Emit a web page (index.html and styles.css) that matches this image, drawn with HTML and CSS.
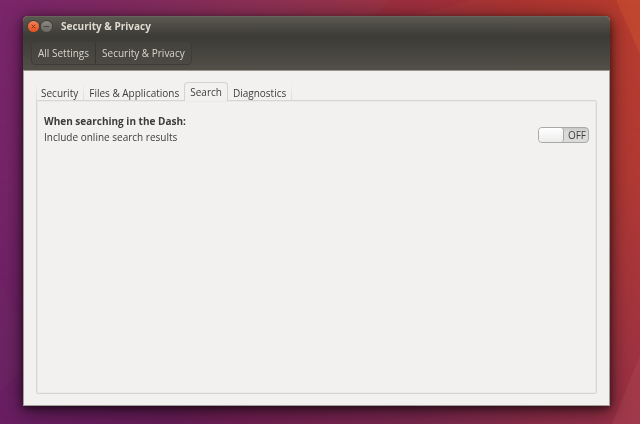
FILE: index.html
```html
<!DOCTYPE html>
<html lang="en">
<head>
<meta charset="utf-8">
<meta name="viewport" content="width=device-width, initial-scale=1">
<title>Security &amp; Privacy</title>
<link rel="stylesheet" href="styles.css">
</head>
<body>
<svg class="wallpaper" viewBox="0 0 640 424" preserveAspectRatio="none" aria-hidden="true">
  <defs>
    <linearGradient id="top" x1="0" y1="0" x2="1" y2="0">
      <stop offset="0" stop-color="#7a266b"/>
      <stop offset=".2" stop-color="#7f2a5f"/>
      <stop offset=".45" stop-color="#8e3151"/>
      <stop offset=".6" stop-color="#993343"/>
      <stop offset=".8" stop-color="#a93431"/>
      <stop offset="1" stop-color="#b83c2e"/>
    </linearGradient>
    <linearGradient id="bottom" x1="0" y1="0" x2="1" y2="0">
      <stop offset="0" stop-color="#681e62"/>
      <stop offset=".25" stop-color="#641c56"/>
      <stop offset=".4" stop-color="#701f50"/>
      <stop offset=".65" stop-color="#78274e"/>
      <stop offset="1" stop-color="#983045"/>
    </linearGradient>
    <linearGradient id="fade" x1="0" y1="0" x2="0" y2="1">
      <stop offset="0" stop-color="#fff" stop-opacity="0"/>
      <stop offset=".4" stop-color="#fff" stop-opacity=".2"/>
      <stop offset="1" stop-color="#fff"/>
    </linearGradient>
    <mask id="lower"><rect width="640" height="424" fill="url(#fade)"/></mask>
  </defs>
  <rect width="640" height="424" fill="url(#top)"/>
  <rect width="640" height="424" fill="url(#bottom)" mask="url(#lower)"/>
  <path d="M389 0H470L400 20H372Z" fill="#9b2438" fill-opacity=".3"/>
  <path d="M616 0H640V54Z" fill="#cf5733" fill-opacity=".4"/>
  <path d="M0 280L24 330V368L0 391Z" fill="#6f3064" fill-opacity=".25"/>
  <path d="M640 356V424H612Z" fill="#b04b57" fill-opacity=".35"/>
</svg>

<main class="window">
  <header class="chrome">
    <div class="titlebar">
      <button class="control close" type="button" aria-label="Close">
        <svg viewBox="0 0 12 12" aria-hidden="true"><path d="M4 4L8 8M8 4L4 8"/></svg>
      </button>
      <button class="control minimize" type="button" aria-label="Minimize">
        <svg viewBox="0 0 12 12" aria-hidden="true"><path d="M3 6H9"/></svg>
      </button>
      <h1 class="title">Security &amp; Privacy</h1>
    </div>
    <nav class="path" aria-label="Settings path">
      <button type="button">All Settings</button>
      <button type="button">Security &amp; Privacy</button>
    </nav>
  </header>

  <div class="content">
    <div class="tabs" role="tablist">
      <button class="tab" type="button" role="tab" aria-selected="false">Security</button>
      <button class="tab" type="button" role="tab" aria-selected="false">Files &amp; Applications</button>
      <button class="tab active" type="button" role="tab" aria-selected="true" id="tab-search" aria-controls="panel-search">Search</button>
      <button class="tab" type="button" role="tab" aria-selected="false">Diagnostics</button>
    </div>
    <section class="panel" role="tabpanel" id="panel-search" aria-labelledby="tab-search">
      <div class="setting">
        <div class="setting-text">
          <h2>When searching in the Dash:</h2>
          <label for="online">Include online search results</label>
        </div>
        <div class="switch">
          <input type="checkbox" role="switch" id="online">
          <span class="state" aria-hidden="true">OFF</span>
        </div>
      </div>
    </section>
  </div>
</main>
</body>
</html>
```

FILE: styles.css
```css
* {
  box-sizing: border-box;
}

body {
  margin: 0;
  min-height: 100vh;
  padding: 16px 30px 18px 23px;
  display: flex;
  font-family: "Open Sans", "Noto Sans", sans-serif;
  font-size: 10px;
  font-weight: 500;
  line-height: 16px;
  color: #3c3c3c;
}

button {
  margin: 0;
  border: 0;
  background: none;
  font: inherit;
  color: inherit;
}

h1,
h2 {
  margin: 0;
  font-size: inherit;
  font-weight: 700;
}

.wallpaper {
  position: fixed;
  inset: 0;
  width: 100%;
  height: 100%;
  z-index: -1;
}

.window {
  flex: 1;
  display: flex;
  flex-direction: column;
  border-radius: 5px 5px 0 0;
  background: #f2f1f0;
  box-shadow: 0 4px 18px 1px rgba(0, 0, 0, 0.6), 0 2px 6px rgba(0, 0, 0, 0.4);
}

.chrome {
  border-bottom: 1px solid #98958f;
  border-radius: 5px 5px 0 0;
  background: linear-gradient(#5c5a50 0, #3c3b37 20px, #3e3d38 24px, #524f47 100%);
  box-shadow: inset 0 1px #66645b;
  color: #dfdbd2;
}

.titlebar {
  display: flex;
  align-items: center;
  gap: 2px;
  height: 20px;
  padding: 0 5px;
}

.control {
  width: 11px;
  height: 11px;
  padding: 0;
  border-radius: 50%;
  box-shadow: 0 0 0 1px #42403b;
}

.control svg {
  display: block;
  width: 100%;
  height: 100%;
  fill: none;
  stroke: #45413a;
}

.close {
  background: linear-gradient(#f68159, #e2511e);
}

.close svg {
  stroke: #80290f;
}

.minimize {
  background: linear-gradient(#8b8982, #686660);
}

.title {
  margin-left: 7px;
}

.path {
  display: flex;
  width: max-content;
  margin: 5px 8px 5px;
  border: 1px solid #3d3c36;
  border-radius: 4px;
  background: linear-gradient(#43423c, #4b4942);
  color: #d9d5cb;
}

.path button {
  height: 22px;
  padding: 0 6px;
}

.path button + button {
  border-left: 1px solid #39382f;
}

.content {
  flex: 1;
  display: flex;
  flex-direction: column;
  padding: 11px 12px;
  border: 1px solid #a39f9d;
  border-top: 0;
}

.tabs {
  position: relative;
  display: flex;
  align-items: flex-end;
  height: 19px;
  margin-bottom: -1px;
}

.tab {
  height: 18px;
  padding: 2px 5px 0;
  border: 1px solid;
  border-width: 0 1px 0 0;
  border-image: linear-gradient(#f2f1f0, #dcdad8) 1;
}

.tab:first-child {
  padding-left: 4px;
  border-left-width: 1px;
}

.tab:has(+ .active) {
  border-right-width: 0;
}

.tab.active {
  height: 19px;
  padding-top: 0;
  border: 1px solid #d4d2d0;
  border-bottom: 0;
  border-image: none;
  border-radius: 4px 4px 0 0;
  background: #f2f1f0;
}

.panel {
  flex: 1;
  padding: 12px 7px;
  border: 1px solid #d7d5d3;
  border-radius: 2px;
  box-shadow: inset 0 0 0 1px #eceae8;
}

.setting {
  display: flex;
  align-items: center;
  justify-content: space-between;
}

.setting-text label {
  display: block;
}

.switch {
  position: relative;
  display: flex;
  margin-top: 12px;
}

.switch input {
  appearance: none;
  width: 51px;
  height: 16px;
  margin: 0;
  border: 1px solid #a9a9a7;
  border-radius: 4px;
  background: linear-gradient(#c8c8c7, #dbdbda 4px);
}

.switch input::before {
  content: "";
  display: block;
  width: 24px;
  height: 14px;
  border-right: 1px solid #a9a9a7;
  border-radius: 3px;
  background: linear-gradient(#fff, #ececeb);
}

.state {
  position: absolute;
  right: 3px;
  line-height: 16px;
  pointer-events: none;
}
```
